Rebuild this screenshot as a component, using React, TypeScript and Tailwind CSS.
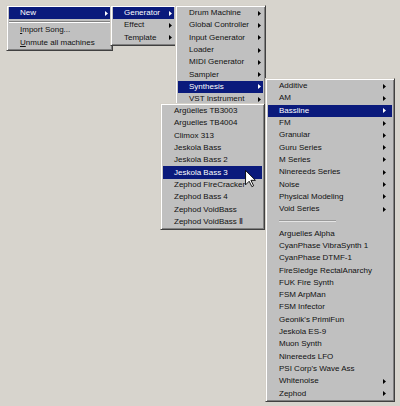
import React from 'react';

type Item = {
  label?: string;
  arrow?: boolean;
  active?: boolean;
  mnemonic?: boolean;
  sep?: boolean;
  line?: boolean;
};

interface MenuProps {
  className: string;
  items: Item[];
  arrowPad?: string;
}

function Arrow({ white }: { white?: boolean }) {
  return (
    <svg width="3" height="5" viewBox="0 0 3 5" className="shrink-0">
      <polygon points="0,0 3,2.5 0,5" fill={white ? '#ffffff' : '#000000'} />
    </svg>
  );
}

function Menu({ className, items, arrowPad = 'pr-[2px]' }: MenuProps) {
  return (
    <div
      className={`absolute flex flex-col bg-[#c0c0c0] border border-t-[#d4d0c8] border-l-[#d4d0c8] border-r-[#404040] border-b-[#404040] px-[2px] py-[1px] shadow-[inset_1px_1px_0_#ffffff,inset_-1px_-1px_0_#808080] ${className}`}
    >
      {items.map((item, i) => {
        if (item.sep) {
          return (
            <div key={i} className="h-[5px] flex items-center">
              <div className="w-full h-0 border-t border-t-[#808080] border-b border-b-white" />
            </div>
          );
        }
        if (item.line) {
          return (
            <div key={i} className="h-[12.3px] flex items-center pl-[11px]">
              <div className="w-[57px] h-0 border-t border-t-[#9a9a9a] border-b border-b-[#e4e4e4]" />
            </div>
          );
        }
        const label = item.label ?? '';
        return (
          <div
            key={i}
            className={`h-[12.3px] flex items-center justify-between pl-[11px] ${arrowPad} ${
              item.active ? 'bg-[#0a1a7c] text-white' : 'text-[#111111]'
            }`}
          >
            <span className="whitespace-nowrap">
              {item.mnemonic ? (
                <>
                  <span className="underline">{label[0]}</span>
                  {label.slice(1)}
                </>
              ) : (
                label
              )}
            </span>
            {item.arrow && <Arrow white={item.active} />}
          </div>
        );
      })}
    </div>
  );
}

const mainItems: Item[] = [
  { label: 'New', arrow: true, active: true },
  { sep: true },
  { label: 'Import Song...', mnemonic: true },
  { label: 'Unmute all machines', mnemonic: true },
];

const newItems: Item[] = [
  { label: 'Generator', arrow: true, active: true },
  { label: 'Effect', arrow: true },
  { label: 'Template', arrow: true },
];

const generatorItems: Item[] = [
  { label: 'Drum Machine', arrow: true },
  { label: 'Global Controller', arrow: true },
  { label: 'Input Generator', arrow: true },
  { label: 'Loader', arrow: true },
  { label: 'MIDI Generator', arrow: true },
  { label: 'Sampler', arrow: true },
  { label: 'Synthesis', arrow: true, active: true },
  { label: 'VST Instrument', arrow: true },
];

const synthesisItems: Item[] = [
  { label: 'Additive', arrow: true },
  { label: 'AM', arrow: true },
  { label: 'Bassline', arrow: true, active: true },
  { label: 'FM', arrow: true },
  { label: 'Granular', arrow: true },
  { label: 'Guru Series', arrow: true },
  { label: 'M Series', arrow: true },
  { label: 'Ninereeds Series', arrow: true },
  { label: 'Noise', arrow: true },
  { label: 'Physical Modeling', arrow: true },
  { label: 'Void Series', arrow: true },
  { line: true },
  { label: 'Arguelles Alpha' },
  { label: 'CyanPhase VibraSynth 1' },
  { label: 'CyanPhase DTMF-1' },
  { label: 'FireSledge RectalAnarchy' },
  { label: 'FUK Fire Synth' },
  { label: 'FSM ArpMan' },
  { label: 'FSM Infector' },
  { label: "Geonik's PrimiFun" },
  { label: 'Jeskola ES-9' },
  { label: 'Muon Synth' },
  { label: 'Ninereeds LFO' },
  { label: "PSI Corp's Wave Ass" },
  { label: 'Whitenoise', arrow: true },
  { label: 'Zephod', arrow: true },
];

const basslineItems: Item[] = [
  { label: 'Argüelles TB3003' },
  { label: 'Arguelles TB4004' },
  { label: 'Climox 313' },
  { label: 'Jeskola Bass' },
  { label: 'Jeskola Bass 2' },
  { label: 'Jeskola Bass 3', active: true },
  { label: 'Zephod FireCracker' },
  { label: 'Zephod Bass 4' },
  { label: 'Zephod VoidBass' },
  { label: 'Zephod VoidBass Ⅱ' },
];

function Cursor() {
  return (
    <svg
      width="11"
      height="18"
      viewBox="0 0 12 20"
      className="absolute left-[245px] top-[170px]"
    >
      <path
        d="M0.5,0.5 L0.5,16.5 L4.5,12.5 L7.5,18.5 L9.5,17.5 L6.5,11.5 L11.5,11.5 Z"
        fill="#ffffff"
        stroke="#000000"
        strokeWidth="1"
        strokeLinejoin="miter"
      />
    </svg>
  );
}

export default function App() {
  return (
    <div
      className="relative w-[400px] h-[406px] overflow-hidden bg-[#d7d4cd] text-[8px] leading-none"
      style={{ fontFamily: '"Liberation Sans", Arial, sans-serif' }}
    >
      <Menu className="left-[6px] top-[5px] w-[107px]" items={mainItems} />
      <Menu className="left-[110px] top-[5px] w-[67px]" items={newItems} />
      <Menu className="left-[175px] top-[5px] w-[91px]" items={generatorItems} />
      <Menu
        className="left-[265px] top-[78px] w-[130px]"
        items={synthesisItems}
        arrowPad="pr-[6px]"
      />
      <Menu className="left-[160px] top-[103px] w-[105px]" items={basslineItems} />
      <Cursor />
    </div>
  );
}
